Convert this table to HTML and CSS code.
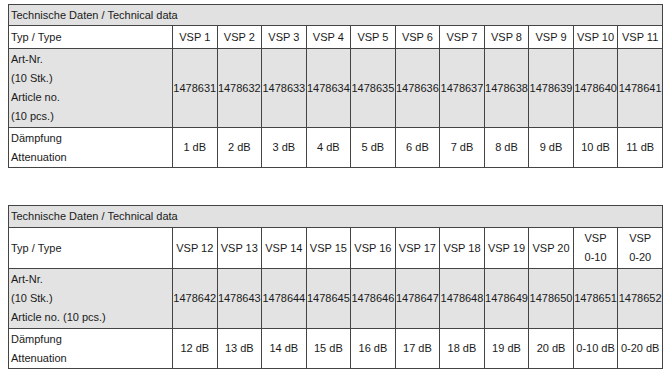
FILE: index.html
```html
<!DOCTYPE html>
<html>
<head>
<meta charset="utf-8">
<link rel="stylesheet" href="styles.css">
</head>
<body>
<div class="page">
<table class="spec t1">
  <colgroup><col class="c-label"><col span="11"></colgroup>
  <tr class="title"><td colspan="12">Technische Daten / Technical data</td></tr>
  <tr class="type"><td class="label">Typ / Type</td><td>VSP 1</td><td>VSP 2</td><td>VSP 3</td><td>VSP 4</td><td>VSP 5</td><td>VSP 6</td><td>VSP 7</td><td>VSP 8</td><td>VSP 9</td><td>VSP 10</td><td>VSP 11</td></tr>
  <tr class="art"><td class="label">Art-Nr.<br>(10 Stk.)<br>Article no.<br>(10 pcs.)</td><td>1478631</td><td>1478632</td><td>1478633</td><td>1478634</td><td>1478635</td><td>1478636</td><td>1478637</td><td>1478638</td><td>1478639</td><td>1478640</td><td>1478641</td></tr>
  <tr class="att"><td class="label">Dämpfung<br>Attenuation</td><td>1 dB</td><td>2 dB</td><td>3 dB</td><td>4 dB</td><td>5 dB</td><td>6 dB</td><td>7 dB</td><td>8 dB</td><td>9 dB</td><td>10 dB</td><td>11 dB</td></tr>
</table>
<table class="spec t2">
  <colgroup><col class="c-label"><col span="11"></colgroup>
  <tr class="title"><td colspan="12">Technische Daten / Technical data</td></tr>
  <tr class="type"><td class="label">Typ / Type</td><td>VSP 12</td><td>VSP 13</td><td>VSP 14</td><td>VSP 15</td><td>VSP 16</td><td>VSP 17</td><td>VSP 18</td><td>VSP 19</td><td>VSP 20</td><td>VSP<br>0-10</td><td>VSP<br>0-20</td></tr>
  <tr class="art"><td class="label">Art-Nr.<br>(10 Stk.)<br>Article no. (10 pcs.)</td><td>1478642</td><td>1478643</td><td>1478644</td><td>1478645</td><td>1478646</td><td>1478647</td><td>1478648</td><td>1478649</td><td>1478650</td><td>1478651</td><td>1478652</td></tr>
  <tr class="att"><td class="label">Dämpfung<br>Attenuation</td><td>12 dB</td><td>13 dB</td><td>14 dB</td><td>15 dB</td><td>16 dB</td><td>17 dB</td><td>18 dB</td><td>19 dB</td><td>20 dB</td><td>0-10 dB</td><td>0-20 dB</td></tr>
</table>
</div>
</body>
</html>
```

FILE: styles.css
```css
html, body {
  margin: 0;
  padding: 0;
  background: #ffffff;
}
.page {
  padding: 4px 0 0 8px;
  display: flex;
  flex-direction: column;
  gap: 37px;
  align-items: flex-start;
}
.spec {
  border-collapse: collapse;
  table-layout: fixed;
  width: 655px;
  font-family: "Liberation Sans", Arial, sans-serif;
  font-size: 11px;
  line-height: 19px;
  color: #1a1a1a;
  border: 1px solid #444;
}
.c-label {
  width: 164px;
}
.spec td {
  border: 1px solid #444;
  padding: 0;
  text-align: center;
  vertical-align: middle;
  white-space: nowrap;
}
.spec td.label,
.spec .title td {
  text-align: left;
  padding-left: 2px;
}
.title td {
  background: #e1e1e1;
}
.art td {
  background: #e3e3e3;
}
.t1 .title td { height: 20px; }
.t1 .type td { height: 22px; }
.t1 .art td { height: 78px; }
.t1 .att td { height: 39px; }
.t2 .title td { height: 21px; }
.t2 .type td { height: 40px; }
.t2 .art td { height: 59px; }
.t2 .att td { height: 39px; }
```
